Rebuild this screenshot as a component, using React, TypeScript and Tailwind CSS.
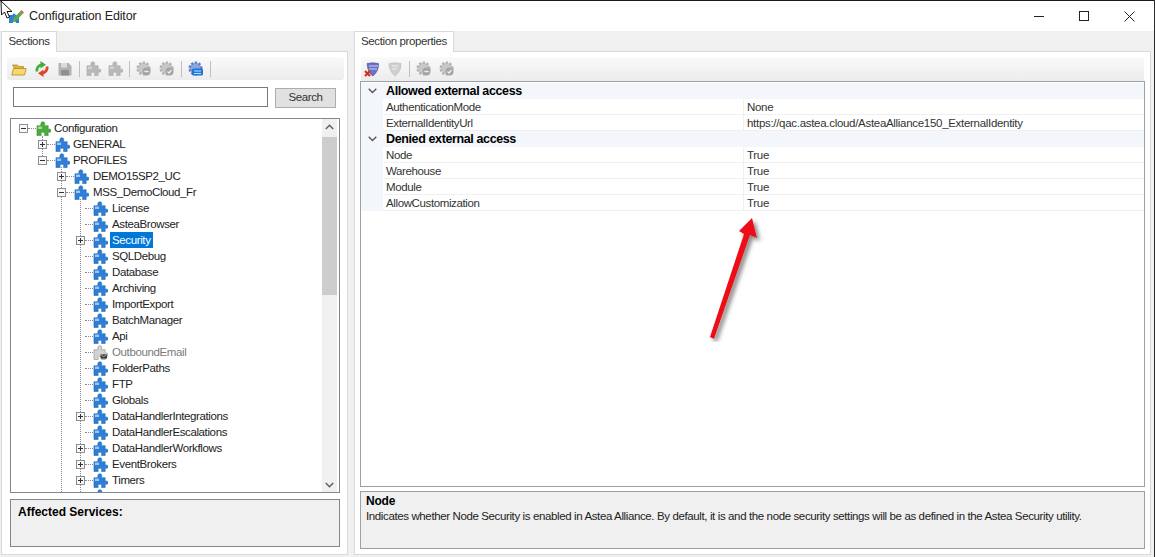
import React from "react";

const PUZZLE = "M5.200 3.200C5.200 1.600 6 .8 7.300.8s2.100.8 2.100 2.200c0 .8-.4 1.200-.4 1.700 0 .2.200.3.500.3H13v3.400c0 .3.200.5.400.5.500 0 .8-.4 1.300-.4.800 0 1.200.8 1.200 1.800s-.4 1.800-1.200 1.800c-.5 0-.8-.4-1.300-.4-.2 0-.4.200-.4.500V15.500H9.400c-.3 0-.5-.2-.5-.4 0-.5.400-.8.400-1.400 0-1-.8-1.600-2-1.600s-2 .6-2 1.600c0 .6.400.9.400 1.400 0 .2-.2.400-.5.400H1V5h3.400c.4 0 .7-.1.700-.4 0-.5-.1-.8.100-1.400z";

function Puzzle({ gray, fill = "#2e7fd8", edge = "#15559f", light = "#9cc8f2" }: { gray?: boolean; fill?: string; edge?: string; light?: string }) {
  return (
    <svg width="15" height="15" viewBox="0 0 16 16" className="shrink-0">
      <path d={PUZZLE} fill={gray ? "#b8b8b8" : fill} stroke={gray ? "#a0a0a0" : edge} strokeWidth=".5" />
      <path d="M2 6h4.500v2.500H2z" fill={gray ? "#d4d4d4" : light} />
    </svg>
  );
}

function MailPuzzle() {
  return (
    <svg width="15" height="15" viewBox="0 0 16 16" className="shrink-0">
      <path d={PUZZLE} fill="#d2d2d2" stroke="#8a8a8a" strokeWidth=".6" />
      <path d="M8 10h7v4.500H8z" fill="#3a3a3a" />
      <path d="M8.500 10.500l3 2 3-2" stroke="#ddd" strokeWidth=".7" fill="none" />
    </svg>
  );
}

function Expander({ open }: { open?: boolean }) {
  return (
    <span className="relative z-10 flex h-[9px] w-[9px] shrink-0 items-center justify-center border border-[#8a8f99] bg-[#f7f7f7]">
      <span className="absolute h-px w-[5px] bg-[#333]" />
      {!open && <span className="absolute h-[5px] w-px bg-[#333]" />}
    </span>
  );
}

type Node = { label: string; level: number; exp?: "open" | "closed"; sel?: boolean; dis?: boolean; root?: boolean };
const nodes: Node[] = [
  { label: "Configuration", level: 0, exp: "open", root: true },
  { label: "GENERAL", level: 1, exp: "closed" },
  { label: "PROFILES", level: 1, exp: "open" },
  { label: "DEMO15SP2_UC", level: 2, exp: "closed" },
  { label: "MSS_DemoCloud_Fr", level: 2, exp: "open" },
  { label: "License", level: 3 },
  { label: "AsteaBrowser", level: 3 },
  { label: "Security", level: 3, exp: "closed", sel: true },
  { label: "SQLDebug", level: 3 },
  { label: "Database", level: 3 },
  { label: "Archiving", level: 3 },
  { label: "ImportExport", level: 3 },
  { label: "BatchManager", level: 3 },
  { label: "Api", level: 3 },
  { label: "OutboundEmail", level: 3, dis: true },
  { label: "FolderPaths", level: 3 },
  { label: "FTP", level: 3 },
  { label: "Globals", level: 3 },
  { label: "DataHandlerIntegrations", level: 3, exp: "closed" },
  { label: "DataHandlerEscalations", level: 3 },
  { label: "DataHandlerWorkflows", level: 3, exp: "closed" },
  { label: "EventBrokers", level: 3, exp: "closed" },
  { label: "Timers", level: 3, exp: "closed" },
  { label: "", level: 3 },
];

function TreeRow({ n }: { n: Node }) {
  const indent = [8, 27, 46, 65][n.level];
  return (
    <div className="flex h-4 shrink-0 items-center" style={{ paddingLeft: indent }}>
      <span className="flex w-[9px] shrink-0 justify-center">{n.exp && <Expander open={n.exp === "open"} />}</span>
      <span className="w-2 shrink-0 border-t border-dotted border-[#888]" />
      <span className="flex w-[15px] shrink-0">
        {n.root ? <Puzzle fill="#4cab3e" edge="#2a7a28" light="#a5dc8f" /> : n.dis ? <MailPuzzle /> : <Puzzle />}
      </span>
      <span
        className={
          (n.level < 2 ? "ml-px " : "ml-[2px] ") +
          "h-4 px-[2px] leading-4 " +
          (n.sel ? "bg-[#0078d7] text-white" : n.dis ? "text-[#7a7a7a]" : "text-[#222]")
        }
      >
        {n.label}
      </span>
    </div>
  );
}

function ToolGear({ blue, mark }: { blue?: boolean; mark?: "minus" | "check" }) {
  return (
    <svg width="16" height="16" viewBox="0 0 16 16" className="shrink-0">
      <circle cx="7.500" cy="7.500" r="5.800" fill={blue ? "#8ea4e0" : "#c8c8c8"} stroke={blue ? "#6480c8" : "#b4b4b4"} strokeWidth="2.600" strokeDasharray="2.200 1.500" />
      {mark === "minus" && (
        <>
          <circle cx="10.500" cy="10.500" r="4" fill="#a4a4a4" />
          <path d="M8.300 10.500h4.400" stroke="#eee" strokeWidth="1.400" />
        </>
      )}
      {mark === "check" && (
        <>
          <circle cx="10.500" cy="10.500" r="4" fill="#a4a4a4" />
          <path d="M8.500 10.500l1.500 1.500 2.500-3" stroke="#eee" strokeWidth="1.300" fill="none" />
        </>
      )}
      {blue && (
        <>
          <rect x="4" y="7.500" width="11" height="7" rx="1.500" fill="#1c78d8" />
          <path d="M6 10h7M13 12.500H6" stroke="#bfe0ff" strokeWidth="1" />
        </>
      )}
    </svg>
  );
}

function Sep() {
  return <span className="mx-[6px] h-[16px] w-px shrink-0 bg-[#c0c0c0]" />;
}

function Panel({ title, tabW, children, className }: { title: string; tabW: string; children: React.ReactNode; className: string }) {
  return (
    <div className={"flex min-h-0 flex-col " + className}>
      <div className={"z-10 -mb-px flex h-[21px] shrink-0 items-center justify-center border border-b-0 border-[#d9d9d9] bg-white text-[#333] " + tabW}>
        {title}
      </div>
      <div className="flex min-h-0 flex-1 flex-col border border-[#d9d9d9] bg-white">{children}</div>
    </div>
  );
}

const Row = ({ k, v }: { k: string; v: string }) => (
  <div className="flex h-4 shrink-0">
    <div className="w-[22px] shrink-0 bg-[#f3f6fb]" />
    <div className="w-[360px] shrink-0 border-b border-[#f0f0f0] pl-[3px] leading-[17px] text-[#333]">{k}</div>
    <div className="flex-1 border-b border-l border-[#f0f0f0] pl-[3px] leading-[17px] tracking-[-0.3px] text-[#333]">{v}</div>
  </div>
);

const Group = ({ t }: { t: string }) => (
  <div className="flex h-4 shrink-0 items-center bg-[#f3f6fb]">
    <div className="flex w-[22px] shrink-0 justify-center">
      <svg width="9" height="6" viewBox="0 0 9 6"><path d="M.7.7 4.500 4.500 8.300.7" fill="none" stroke="#555" strokeWidth="1.300" /></svg>
    </div>
    <div className="pl-[3px] pt-px text-[12.5px] font-bold text-black">{t}</div>
  </div>
);

export default function App() {
  return (
    <div className="relative flex h-[557px] w-[1155px] flex-col overflow-hidden bg-[#f0f0f0] text-[11.5px] tracking-[-0.38px]" style={{ fontFamily: '"Liberation Sans", Arial, sans-serif' }}>
      <div className="h-px shrink-0 bg-[#1a1a1a]" />
      <div className="flex h-[30px] shrink-0 items-center bg-white">
        <svg width="16" height="16" viewBox="0 0 16 16" className="ml-[8px] shrink-0">
          <path d="M1 7h3.500c.6-2 2.600-2 3 0H11v8H8c.2-2-3-2-3 0H1z" fill="#2e7fd8" />
          <path d="M5 11 12 3.500 14.500 6 7.500 13.500 4.500 14z" fill="#58ac40" />
          <path d="M12 3.500 13.500 2 16 4.500 14.500 6z" fill="#dd5a3a" />
        </svg>
        <span className="ml-[5px] text-[12.5px] tracking-[-0.15px] text-[#222]">Configuration Editor</span>
        <div className="ml-auto mr-[20px] flex items-center gap-[35px]">
          <span className="h-px w-[10px] bg-[#222]" />
          <span className="h-[10px] w-[10px] border border-[#222]" />
          <svg width="11" height="11" viewBox="0 0 11 11"><path d="M.5.5l10 10M10.500.5l-10 10" stroke="#222" /></svg>
        </div>
      </div>
      <div className="flex min-h-0 flex-1 gap-[6px] pb-[2px] pl-px pr-[4px]">
        <Panel title="Sections" tabW="w-[56px]" className="w-[347px] shrink-0">
          <div className="ml-[5px] mr-[3px] mt-[5px] flex h-[23px] shrink-0 items-center rounded-[3px] bg-gradient-to-b from-[#fafafa] to-[#ececec] pl-[4px]">
            <svg width="16" height="16" viewBox="0 0 16 16" className="mr-[7px] shrink-0">
              <path d="M1.500 4h5l1 1.500h5V8H4z" fill="#e0b23e" stroke="#b0841c" strokeWidth=".7" />
              <path d="M.8 14 2.500 7.500h12.700L13.500 14z" fill="#f6d871" stroke="#b88a1e" strokeWidth=".8" />
            </svg>
            <svg width="16" height="16" viewBox="0 0 16 16" className="mr-[7px] shrink-0">
              <path d="M3 10.500A5.500 5.500 0 0 1 7.500 3.800" fill="none" stroke="#3fae3a" strokeWidth="2.800" />
              <path d="M6.500 0 12 3.800 6.500 7.500z" fill="#3fae3a" />
              <path d="M13 5.500A5.500 5.500 0 0 1 8.500 12.200" fill="none" stroke="#e0452c" strokeWidth="2.800" />
              <path d="M9.500 16 4 12.200 9.500 8.500z" fill="#e0452c" />
            </svg>
            <svg width="16" height="16" viewBox="0 0 16 16" className="shrink-0">
              <path d="M1.500 2h10l3 3v9.500h-13z" fill="#b2b2b2" />
              <path d="M4 2h6v4.500H4z" fill="#dcdcdc" />
              <path d="M4 9h8v5.500H4z" fill="#8f8f8f" />
            </svg>
            <Sep />
            <span className="mr-[7px]"><Puzzle gray /></span>
            <Puzzle gray />
            <Sep />
            <span className="mr-[7px]"><ToolGear mark="minus" /></span>
            <ToolGear mark="check" />
            <Sep />
            <ToolGear blue />
            <Sep />
          </div>
          <div className="mt-[7px] flex shrink-0 items-start pl-[11px]">
            <div className="h-[20px] w-[255px] border border-[#7a7a7a] bg-white" />
            <div className="ml-[7px] mt-px flex h-[20px] w-[61px] items-center justify-center border border-[#adadad] bg-[#e1e1e1] text-[#333]">Search</div>
          </div>
          <div className="ml-[8px] mr-[7px] mt-[10px] flex h-[375px] shrink-0 border border-[#828790] bg-white">
            <div className="relative min-w-0 flex-1 overflow-hidden pt-px">
              <div className="absolute left-[31px] top-[17px] h-[24px] border-l border-dotted border-[#888]" />
              <div className="absolute bottom-0 left-[50px] top-[48px] border-l border-dotted border-[#888]" />
              <div className="absolute bottom-0 left-[69px] top-[80px] border-l border-dotted border-[#888]" />
              {nodes.map((n) => <TreeRow key={n.label} n={n} />)}
            </div>
            <div className="mr-[2px] flex w-[15px] shrink-0 flex-col bg-[#f0f0f0]">
              <div className="flex h-[15px] shrink-0 items-center justify-center">
                <svg width="9" height="6" viewBox="0 0 9 6"><path d="M.8 5 4.500 1.300 8.200 5" fill="none" stroke="#606060" strokeWidth="1.500" /></svg>
              </div>
              <div className="mt-[3px] h-[158px] bg-[#cdcdcd]" />
              <div className="mt-auto flex h-[15px] shrink-0 items-center justify-center">
                <svg width="9" height="6" viewBox="0 0 9 6"><path d="M.8 1 4.500 4.700 8.200 1" fill="none" stroke="#606060" strokeWidth="1.500" /></svg>
              </div>
            </div>
          </div>
          <div className="ml-[8px] mr-[7px] mt-[6px] h-[48px] shrink-0 border border-[#828790] bg-[#f0f0f0] pl-[7px] pt-[3px] text-[12px] font-bold tracking-normal text-black">Affected Services:</div>
        </Panel>
        <Panel title="Section properties" tabW="w-[100px]" className="min-w-0 flex-1">
          <div className="mx-[6px] mt-[5px] flex h-[24px] shrink-0 items-center bg-gradient-to-b from-[#fafafa] to-[#ececec] pl-[3px]">
            <svg width="16" height="16" viewBox="0 0 16 16" className="mr-[7px] shrink-0">
              <path d="M3 2.500Q9 1 14.500 2.500 15 10 9 15 4 13 3 2.500z" fill="#6a72c4" stroke="#4a52a0" strokeWidth=".6" />
              <path d="M5 5h9M5 8h8" stroke="#c8ccf0" strokeWidth="1" />
              <path d="M1 10l5 5M6 10l-5 5" stroke="#d8301c" strokeWidth="2.200" />
            </svg>
            <svg width="16" height="16" viewBox="0 0 16 16" className="shrink-0">
              <path d="M2 2.500Q8 1 14 2.500 14.500 10 8 15 2 10 2 2.500z" fill="#cfcfcf" stroke="#b8b8b8" strokeWidth=".6" />
              <path d="M5 5h6M5 8h5" stroke="#eee" strokeWidth="1" />
            </svg>
            <Sep />
            <span className="mr-[7px]"><ToolGear mark="minus" /></span>
            <ToolGear mark="check" />
          </div>
          <div className="mx-[5px] flex h-[406px] shrink-0 flex-col border border-[#a0a0a0] bg-white pt-px">
            <Group t="Allowed external access" />
            <Row k="AuthenticationMode" v="None" />
            <Row k="ExternalIdentityUrl" v="https://qac.astea.cloud/AsteaAlliance150_ExternalIdentity" />
            <Group t="Denied external access" />
            <Row k="Node" v="True" />
            <Row k="Warehouse" v="True" />
            <Row k="Module" v="True" />
            <Row k="AllowCustomization" v="True" />
          </div>
          <div className="mx-[5px] mt-[4px] h-[58px] shrink-0 border border-[#a0a0a0] bg-[#f0f0f0] pl-[5px] pt-[2px] leading-[15px] text-[#222]">
            <div className="text-[12px] font-bold tracking-[-0.2px] text-black">Node</div>
            <div>Indicates whether Node Security is enabled in Astea Alliance. By default, it is and the node security settings will be as defined in the Astea Security utility.</div>
          </div>
        </Panel>
      </div>
      <div className="absolute bottom-0 right-0 top-0 w-px bg-[#2a2a2a]" />
      <svg width="70" height="130" viewBox="0 0 70 130" className="absolute left-[700px] top-[212px]">
        <defs>
          <filter id="s" x="-50%" y="-50%" width="200%" height="200%"><feDropShadow dx="3" dy="3" stdDeviation="2" floodColor="#555" floodOpacity=".7" /></filter>
        </defs>
        <path d="M10 125 L44 22 L39 19 L52 6 L57 26 L50 23 L14 127Z" fill="#ee0f13" filter="url(#s)" />
      </svg>
      <svg width="14" height="20" viewBox="0 0 14 20" className="absolute left-0 top-0">
        <path d="M1 1L1.500 15 4.500 12 7 18 9.500 17 7 11.500H12Z" fill="#fff" stroke="#111" strokeWidth="1" />
      </svg>
    </div>
  );
}
